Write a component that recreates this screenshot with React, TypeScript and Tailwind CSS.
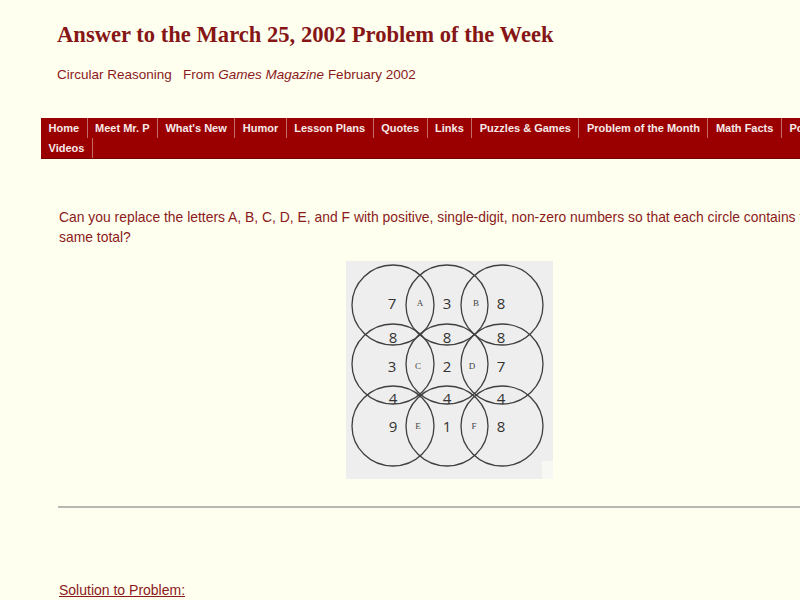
export default function App() {
  const nav1 = [
    "Home",
    "Meet Mr. P",
    "What's New",
    "Humor",
    "Lesson Plans",
    "Quotes",
    "Links",
    "Puzzles & Games",
    "Problem of the Month",
    "Math Facts",
    "Posters",
  ];
  const cx = [47, 101, 156];
  const cy = [44, 103, 165];
  const nums: [string, number, number][] = [
    ["7", 46, 42], ["3", 101, 42], ["8", 155, 42],
    ["8", 47, 76], ["8", 101, 76], ["8", 155, 76],
    ["3", 46, 105], ["2", 101, 105], ["7", 155, 105],
    ["4", 47, 137], ["4", 101, 137], ["4", 155, 137],
    ["9", 47, 165], ["1", 101, 165], ["8", 155, 165],
  ];
  const letters: [string, number, number][] = [
    ["A", 74, 42], ["B", 130, 42],
    ["C", 72, 105], ["D", 126, 105],
    ["E", 72, 165], ["F", 128, 165],
  ];
  const body = "font-['Liberation_Sans',Arial,sans-serif]";
  const item =
    "shrink-0 h-[20px] leading-[20px] px-[7.5px] text-[11px] font-bold text-[#f6e9e9] border-r border-[#c46a6a] font-['Liberation_Sans',Arial,sans-serif] whitespace-nowrap";
  return (
    <div className="w-full h-[600px] overflow-hidden bg-[#fffff0]">
      <div className="w-[1000px]">
        <h1 className="pl-[57px] pt-[20px] text-[22.6px] leading-[30px] font-bold text-[#861616] font-['Liberation_Serif','Times_New_Roman',serif]">
          Answer to the March 25, 2002 Problem of the Week
        </h1>
        <p className={`pl-[57px] mt-[15px] text-[13.5px] leading-[20px] text-[#8b1a1a] ${body}`}>
          Circular Reasoning&nbsp;&nbsp;&nbsp;From <i>Games Magazine</i> February 2002
        </p>
        <nav className="ml-[41px] mt-[33px] w-[900px] bg-[#9b0000] flex flex-col border-b border-[#7a0000]">
          <div className="flex">
            {nav1.map((n) => (
              <span key={n} className={item}>
                {n}
              </span>
            ))}
          </div>
          <div className="flex">
            <span className={item}>Videos</span>
          </div>
        </nav>
        <p className={`pl-[59px] mt-[48px] text-[13.9px] leading-[20px] text-[#8b1a1a] whitespace-nowrap ${body}`}>
          Can you replace the letters A, B, C, D, E, and F with positive, single-digit, non-zero numbers so that each circle contains the
          <br />
          same total?
        </p>
        <div className="ml-[346px] mt-[14px] w-[207px] h-[218px]">
          <svg width="207" height="218" viewBox="0 0 207 218">
            <rect x="0" y="0" width="207" height="218" fill="#eeeeee" />
            <rect x="196" y="200" width="11" height="18" fill="#f7f7f4" />
            {cy.map((y) =>
              cx.map((x) => (
                <ellipse
                  key={`${x}-${y}`}
                  cx={x}
                  cy={y}
                  rx="41"
                  ry="40"
                  fill="none"
                  stroke="#3f3f3f"
                  strokeWidth="1.3"
                />
              ))
            )}
            {nums.map(([t, x, y], i) => (
              <text
                key={i}
                x={x}
                y={y}
                textAnchor="middle"
                dominantBaseline="central"
                fontSize="15"
                fill="#333"
                fontFamily="'Open Sans', 'DejaVu Sans', sans-serif"
              >
                {t}
              </text>
            ))}
            {letters.map(([t, x, y], i) => (
              <text
                key={i}
                x={x}
                y={y}
                textAnchor="middle"
                dominantBaseline="central"
                fontSize="9"
                fill="#444"
                fontFamily="'Liberation Serif', serif"
              >
                {t}
              </text>
            ))}
          </svg>
        </div>
        <hr className="ml-[58px] mt-[27px] w-[900px] border-0 border-t-2 border-[#b8b8b0]" />
        <p className={`pl-[59px] mt-[72px] text-[14px] leading-[20px] text-[#8b1a1a] underline ${body}`}>
          Solution to Problem:
        </p>
      </div>
    </div>
  );
}
